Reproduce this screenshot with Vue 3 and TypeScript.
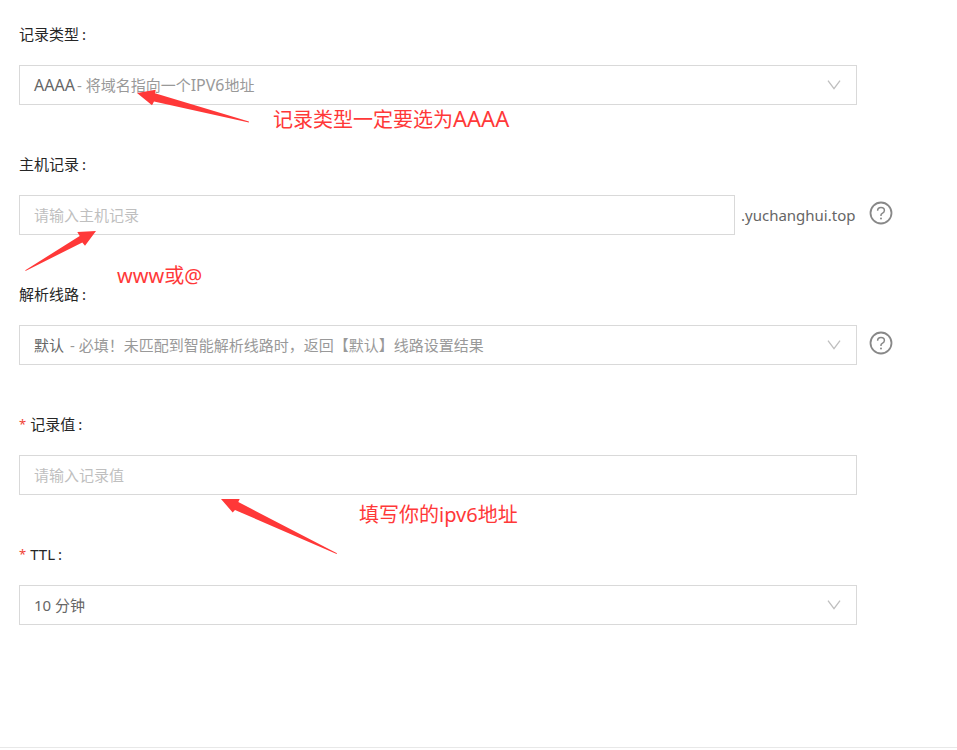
<script setup lang="ts">
import { reactive } from 'vue'

interface Part {
  text: string
  tone: 'main' | 'muted'
  caps?: boolean
}

interface Choice {
  value: string
  parts: Part[]
}

const types: Choice[] = [
  {
    value: 'AAAA',
    parts: [
      { text: 'AAAA', tone: 'main', caps: true },
      { text: '- 将域名指向一个', tone: 'muted' },
      { text: 'IPV6', tone: 'muted', caps: true },
      { text: '地址', tone: 'muted' },
    ],
  },
]

const lines: Choice[] = [
  {
    value: 'default',
    parts: [
      { text: '默认', tone: 'main' },
      { text: ' - 必填！未匹配到智能解析线路时，返回【默认】线路设置结果', tone: 'muted' },
    ],
  },
]

const form = reactive({ type: 'AAAA', host: '', line: 'default', value: '', ttl: '600' })

const partsOf = (list: Choice[], value: string): Part[] =>
  list.find((c) => c.value === value)?.parts ?? []
const labelOf = (c: Choice): string => c.parts.map((p) => p.text).join('')
</script>

<template>
  <form class="form" @submit.prevent>
    <div class="item">
      <label class="label" for="type">记录类型<span class="colon">:</span></label>
      <div class="row">
        <div class="select">
          <select id="type" v-model="form.type" class="box rich">
            <option v-for="c in types" :key="c.value" :value="c.value">{{ labelOf(c) }}</option>
          </select>
          <span class="shown" aria-hidden="true"><span v-for="(p, i) in partsOf(types, form.type)" :key="i" :class="[p.tone, { caps: p.caps }]">{{ p.text }}</span></span>
          <svg class="chevron" viewBox="0 0 14 10" aria-hidden="true"><path d="M1 .7 7 8.7 13 .7" /></svg>
        </div>
      </div>
      <svg class="arrow arrow-type" viewBox="0 0 114 36" aria-hidden="true">
        <path d="M1 5 19.7 1.7 19 5.2 112.9 33.6V34.4L18 13.5 16 17.2Z" />
      </svg>
      <p class="note note-type">记录类型一定要选为<span class="caps">AAAA</span></p>
    </div>

    <div class="item">
      <label class="label" for="host">主机记录<span class="colon">:</span></label>
      <div class="row">
        <div class="joined">
          <input id="host" v-model="form.host" class="box" type="text" placeholder="请输入主机记录" />
          <span class="suffix">.yuchanghui.top</span>
        </div>
        <button class="help" type="button" aria-label="主机记录">
          <svg viewBox="0 0 24 24" aria-hidden="true">
            <circle cx="12" cy="12" r="10.5" />
            <path class="hook" d="M8.6 9.8C8.6 7.7 10 6.5 12 6.5S15.4 7.8 15.4 9.5C15.4 11.1 14.3 11.8 13.3 12.3 12.4 12.8 12 13.2 12 14.1V14.9" />
            <circle class="dot" cx="12" cy="17.4" r="1" />
          </svg>
        </button>
      </div>
      <svg class="arrow arrow-host" viewBox="0 0 74 42" aria-hidden="true">
        <path d="M72 1 53.3 2 55.7 6 1.3 40.2Q1 41 2 40.7L58.3 12.5 61 15.7Z" />
      </svg>
      <p class="note note-host">www或@</p>
    </div>

    <div class="item">
      <label class="label" for="line">解析线路<span class="colon">:</span></label>
      <div class="row">
        <div class="select">
          <select id="line" v-model="form.line" class="box rich">
            <option v-for="c in lines" :key="c.value" :value="c.value">{{ labelOf(c) }}</option>
          </select>
          <span class="shown" aria-hidden="true"><span v-for="(p, i) in partsOf(lines, form.line)" :key="i" :class="[p.tone, { caps: p.caps }]">{{ p.text }}</span></span>
          <svg class="chevron" viewBox="0 0 14 10" aria-hidden="true"><path d="M1 .7 7 8.7 13 .7" /></svg>
        </div>
        <button class="help" type="button" aria-label="解析线路">
          <svg viewBox="0 0 24 24" aria-hidden="true">
            <circle cx="12" cy="12" r="10.5" />
            <path class="hook" d="M8.6 9.8C8.6 7.7 10 6.5 12 6.5S15.4 7.8 15.4 9.5C15.4 11.1 14.3 11.8 13.3 12.3 12.4 12.8 12 13.2 12 14.1V14.9" />
            <circle class="dot" cx="12" cy="17.4" r="1" />
          </svg>
        </button>
      </div>
    </div>

    <div class="item">
      <label class="label" for="value"><span class="star">*</span>记录值<span class="colon">:</span></label>
      <div class="row">
        <input id="value" v-model="form.value" class="box" type="text" placeholder="请输入记录值" required />
      </div>
      <svg class="arrow arrow-value" viewBox="0 0 118 58" aria-hidden="true">
        <path d="M1 1H19.7L18.3 4 117 55.2 116.6 56 15 12 12.7 14.5Z" />
      </svg>
      <p class="note note-value">填写你的ipv6地址</p>
    </div>

    <div class="item">
      <label class="label" for="ttl"><span class="star">*</span>TTL<span class="colon">:</span></label>
      <div class="row">
        <div class="select">
          <select id="ttl" v-model="form.ttl" class="box">
            <option value="600">10 分钟</option>
          </select>
          <svg class="chevron" viewBox="0 0 14 10" aria-hidden="true"><path d="M1 .7 7 8.7 13 .7" /></svg>
        </div>
      </div>
    </div>
  </form>
</template>

<style>
body {
  background: #fff;
}
</style>

<style scoped>
.form {
  padding: 0 0 97px 19px;
  border-bottom: 1px solid #e8e8e8;
  color: #262626;
  font-family: "Noto Sans", "Noto Sans CJK SC", sans-serif;
  font-size: 15px;
  line-height: 20px;
}

.item {
  position: relative;
  display: flex;
  flex-direction: column;
  gap: 21px;
  padding: 24px 0 25px;
}

.label {
  display: flex;
  align-items: center;
  align-self: flex-start;
  height: 20px;
}

.colon {
  margin-left: 3px;
}

.star {
  margin-right: 4px;
  color: #f04134;
  font-size: 13px;
}

.row {
  display: grid;
  grid-template-columns: minmax(0, 1fr) 100px;
  align-items: center;
}

.box {
  box-sizing: border-box;
  width: 100%;
  height: 40px;
  margin: 0;
  padding: 0 14px;
  border: 1px solid #d9d9d9;
  border-radius: 0;
  outline: none;
  background: #fff;
  color: #666;
  font: inherit;
  appearance: none;
}

.box:focus-visible {
  border-color: #8c8c8c;
}

.box::placeholder {
  color: #bfbfbf;
  opacity: 1;
}

.select {
  display: grid;
  align-items: center;
}

.select > * {
  grid-area: 1 / 1;
}

/* The coloured value is drawn over the select, whose own text has one colour only. */
.rich {
  color: transparent;
}

.rich option {
  color: #666;
}

.shown {
  padding: 0 40px 0 15px;
  overflow: hidden;
  white-space: pre;
  pointer-events: none;
}

.main {
  color: #666;
}

.muted {
  color: #999;
}

.main + .muted {
  margin-left: 2px;
}

.shown .caps {
  font-size: 16px;
}

.chevron {
  justify-self: end;
  width: 14px;
  height: 10px;
  margin-right: 16px;
  fill: none;
  stroke: #bfbfbf;
  stroke-width: 1.3;
  pointer-events: none;
}

.joined {
  display: flex;
  align-items: center;
  gap: 6px;
}

.joined .box {
  flex: 1;
  min-width: 0;
}

.suffix {
  min-width: 116px;
  color: #666;
}

.help {
  justify-self: start;
  height: 28px;
  margin-left: 12px;
  padding: 0 0 4px;
  border: 0;
  background: none;
  cursor: pointer;
}

.help svg {
  display: block;
  width: 24px;
  height: 24px;
  fill: none;
  stroke: #888;
  stroke-width: 1.8;
}

.help .hook {
  stroke-width: 1.5;
}

.help .dot {
  fill: #888;
  stroke: none;
}

.arrow {
  position: absolute;
  fill: #ff3838;
  pointer-events: none;
}

.arrow-type {
  top: 88px;
  left: 117px;
  width: 114px;
  height: 36px;
}

.arrow-host {
  top: 100px;
  left: 5px;
  width: 74px;
  height: 42px;
}

.arrow-value {
  top: 108px;
  left: 201px;
  width: 118px;
  height: 58px;
}

.note {
  position: absolute;
  margin: 0;
  color: #ff3838;
  font-size: 20px;
  line-height: 28px;
  white-space: nowrap;
  pointer-events: none;
}

.note .caps {
  font-size: 22px;
}

.note-type {
  top: 104px;
  left: 254px;
}

.note-host {
  top: 132px;
  left: 98px;
}

.note-value {
  top: 111px;
  left: 340px;
}
</style>
